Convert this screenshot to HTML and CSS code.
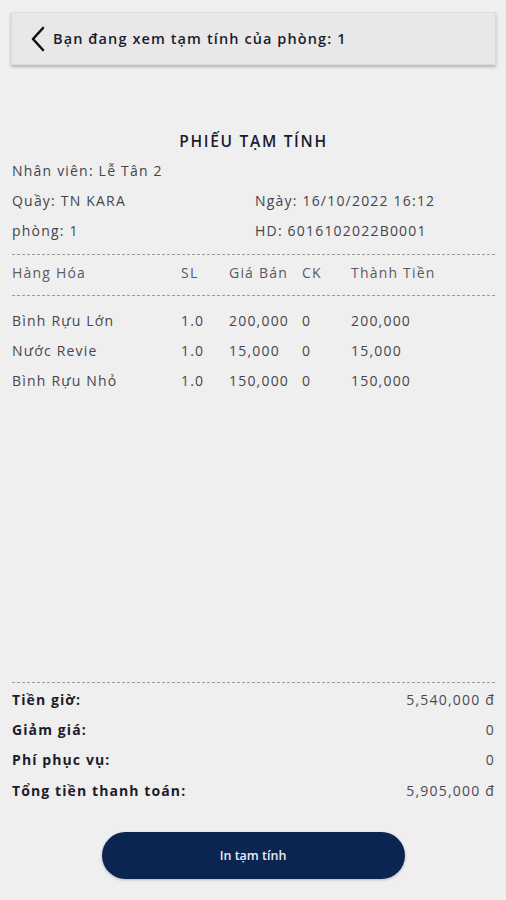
FILE: index.html
```html
<!DOCTYPE html>
<html lang="vi">
<head>
<meta charset="utf-8">
<title>Phiếu tạm tính</title>
<link rel="stylesheet" href="styles.css">
</head>
<body>
<div class="page">
  <header class="topbar">
    <svg class="back" width="18" height="26" viewBox="0 0 18 26"><path d="M14 2 L4 13 L14 24" fill="none" stroke="#111" stroke-width="2.6" stroke-linecap="round" stroke-linejoin="round"/></svg>
    <span class="topbar-title">Bạn đang xem tạm tính của phòng: 1</span>
  </header>

  <main class="receipt">
    <h1 class="title">PHIẾU TẠM TÍNH</h1>
    <div class="info">
      <div class="info-row"><span>Nhân viên: Lễ Tân 2</span></div>
      <div class="info-row"><span>Quầy: TN KARA</span><span class="right">Ngày: 16/10/2022 16:12</span></div>
      <div class="info-row"><span>phòng: 1</span><span class="right">HD: 6016102022B0001</span></div>
    </div>
    <div class="dash"></div>
    <div class="grid head">
      <span>Hàng Hóa</span><span>SL</span><span>Giá Bán</span><span>CK</span><span>Thành Tiền</span>
    </div>
    <div class="dash"></div>
    <div class="items">
      <div class="grid"><span>Bình Rựu Lớn</span><span>1.0</span><span>200,000</span><span>0</span><span>200,000</span></div>
      <div class="grid"><span>Nước Revie</span><span>1.0</span><span>15,000</span><span>0</span><span>15,000</span></div>
      <div class="grid"><span>Bình Rựu Nhỏ</span><span>1.0</span><span>150,000</span><span>0</span><span>150,000</span></div>
    </div>
    <div class="spacer"></div>
    <div class="dash"></div>
    <div class="summary">
      <div class="sum-row"><span class="lbl">Tiền giờ:</span><span>5,540,000 đ</span></div>
      <div class="sum-row"><span class="lbl">Giảm giá:</span><span>0</span></div>
      <div class="sum-row"><span class="lbl">Phí phục vụ:</span><span>0</span></div>
      <div class="sum-row"><span class="lbl">Tổng tiền thanh toán:</span><span>5,905,000 đ</span></div>
    </div>
  </main>

  <div class="actions">
    <button class="print">In tạm tính</button>
  </div>
</div>
</body>
</html>
```
FILE: styles.css
```css
* { box-sizing: border-box; }
html, body { margin: 0; padding: 0; }
body {
  background: #efefef;
  font-family: "Open Sans", "Noto Sans", sans-serif;
  color: #2b2b36;
  width: 506px;
  height: 900px;
  overflow: hidden;
}
.page {
  display: flex;
  flex-direction: column;
  height: 900px;
  padding: 12px 10px 0 11px;
}
.topbar {
  height: 53px;
  background: #e8e8e8;
  border: 1px solid #dcdcdc;
  box-shadow: 0 2px 3px rgba(0,0,0,0.25);
  display: flex;
  align-items: center;
  padding-left: 17px;
  gap: 6px;
}
.back { flex: none; margin-top: 1px; }
.topbar-title {
  font-size: 14.5px;
  font-weight: 600;
  color: #1c1c2c;
  letter-spacing: 1.1px;
}
.receipt {
  flex: 1;
  display: flex;
  flex-direction: column;
  padding: 0 1px 0 1px;
  font-size: 14px;
  letter-spacing: 1.2px;
}
.title {
  margin: 66px 0 0;
  text-align: center;
  font-size: 15.5px;
  font-weight: 600;
  letter-spacing: 1.7px;
  color: #1a1a2e;
  line-height: 20px;
}
.info { margin-top: 4px; }
.info-row {
  display: grid;
  grid-template-columns: 243px 1fr;
  height: 30px;
  align-items: center;
  color: #44444c;
}
.dash {
  height: 0;
  border-top: 1.5px dashed #9a9a9a;
  margin: 9px 0 0;
}
.grid {
  display: grid;
  grid-template-columns: 169px 48px 73px 49px 1fr;
  height: 30px;
  align-items: center;
  color: #46464e;
}
.head { margin-top: 3px; height: 28px; color: #5a5a62; }
.items { margin-top: 9px; }
.spacer { flex: 1; }
.summary { margin-top: 1px; }
.sum-row {
  display: flex;
  justify-content: space-between;
  height: 30px;
  align-items: center;
  color: #4a4a52;
}
.lbl { font-weight: 700; color: #1c1c2c; letter-spacing: 1.1px; }
.sum-row:last-child { height: 33px; }
.actions {
  display: flex;
  justify-content: center;
  padding: 25px 0 21px;
}
.print {
  width: 303px;
  height: 47px;
  border: none;
  border-radius: 24px;
  background: #0b2550;
  color: #e8ecf4;
  font-family: "Open Sans", "Noto Sans", sans-serif;
  font-size: 12.5px;
  font-weight: 600;
  box-shadow: 0 1px 3px rgba(0,0,0,0.25);
  margin-left: -1px;
}
```
